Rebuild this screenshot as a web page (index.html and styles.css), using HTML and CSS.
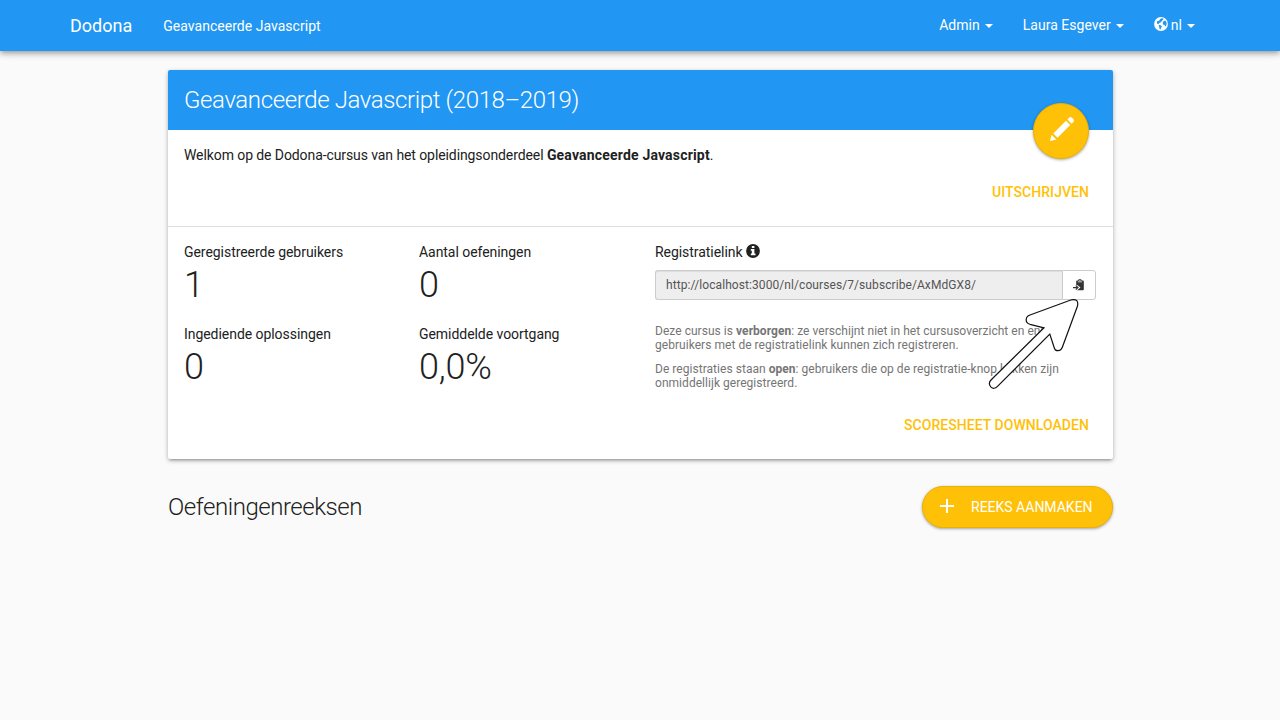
FILE: index.html
```html
<!DOCTYPE html>
<html lang="nl">
<head>
<meta charset="utf-8">
<title>Geavanceerde Javascript - Dodona</title>
<link rel="stylesheet" href="styles.css">
</head>
<body>
<nav class="navbar">
  <div class="nav-left">
    <a class="brand">Dodona</a>
    <a class="crumb">Geavanceerde Javascript</a>
  </div>
  <div class="nav-right">
    <a class="nav-item">Admin<span class="caret"></span></a>
    <a class="nav-item">Laura Esgever<span class="caret"></span></a>
    <a class="nav-item"><svg class="globe" viewBox="0 0 14 14"><circle cx="7" cy="7" r="6.9" fill="#fff"/><path d="M7.6 1.2 9.4 1.6 9.2 2.8 8 3.2 8.4 4.3 7.2 4.5 6.6 5.6 4.8 6 5 7.1 3.6 6.9 2.8 5.6 3.4 4.1 5.2 3.7 6 2.3z M9.8 4 11.4 3.4 12.7 6 12.4 8.2 11.4 9.6 10.6 8 9 7.4 8.7 5.5z M4.6 7.7 6.7 8.3 8 9.5 7 10.8 6.6 12.7 5.4 11.6 5.1 9.6z" fill="#2196f3"/></svg>nl<span class="caret"></span></a>
  </div>
</nav>
<main class="page">
  <section class="card">
    <header class="card-title">
      <h2>Geavanceerde Javascript (2018–2019)</h2>
      <a class="fab"><svg viewBox="0 0 24 24" class="pencil"><g transform="translate(13 11) rotate(-45)" fill="#fff"><path d="M-16.9 0-11.4-3.4V3.4zM-9.3-3H8.7V3H-9.3z"/><path d="M10.6-3h2.4q2 0 2 2V1q0 2-2 2h-2.4z"/></g></svg></a>
    </header>
    <div class="intro">
      <p><span class="welcome">Welkom op de Dodona-cursus van het opleidingsonderdeel </span><b class="course">Geavanceerde Javascript</b>.</p>
      <a class="flat-btn">UITSCHRIJVEN</a>
    </div>
    <div class="details">
      <div class="stats">
        <div class="stat"><span>Geregistreerde gebruikers</span><strong>1</strong></div>
        <div class="stat"><span>Aantal oefeningen</span><strong>0</strong></div>
        <div class="stat"><span>Ingediende oplossingen</span><strong>0</strong></div>
        <div class="stat"><span>Gemiddelde voortgang</span><strong>0,0%</strong></div>
      </div>
      <div class="registration">
        <div class="label">Registratielink <svg class="info" viewBox="0 0 14 14"><circle cx="7" cy="7" r="6.9"/><path d="M5.8 2h2.6v2H5.8zM4.8 5.1h3.6v4.5h1.1v1.6H4.8V9.6h1V6.7h-1z" fill="#fff"/></svg></div>
        <div class="input-group">
          <div class="field">http://localhost:3000/nl/courses/7/subscribe/AxMdGX8/</div>
          <a class="copy"><svg viewBox="0 0 12 12"><path d="M4 1.6h1.3V.9q0-.6.6-.6h2q.6 0 .6.6v.7H10q.8 0 .8.8v8.1q0 .8-.8.8H4q-.8 0-.8-.8V2.4q0-.8.8-.8z" fill="#333"/><path d="M4.8 3.2h4.3V2.5H4.8zM6.3 1.1h1.2v.7H6.3z" fill="#fff"/><path d="M3 6.7 5.4 8.6 3 10.5M3.2 8.6h2" fill="none" stroke="#fff" stroke-width="2.6"/><path d="M0 8.6h4.6M2.8 6.6 5 8.6 2.8 10.6" fill="none" stroke="#333" stroke-width="1.1"/></svg></a>
        </div>
        <p class="help">Deze cursus is <b>verborgen</b>: ze verschijnt niet in het cursusoverzicht en enkel gebruikers met de registratielink kunnen zich registreren.</p>
        <p class="help">De registraties staan <b>open</b>: gebruikers die op de registratie-knop klikken zijn onmiddellijk geregistreerd.</p>
      </div>
    </div>
    <div class="actions"><a class="flat-btn">SCORESHEET DOWNLOADEN</a></div>
  </section>
  <div class="series-head">
    <h2>Oefeningenreeksen</h2>
    <a class="add"><svg viewBox="0 0 14 14"><path d="M7 0v14M0 7h14" stroke="#fff" stroke-width="2"/></svg>REEKS AANMAKEN</a>
  </div>
</main>
<svg class="pointer" viewBox="0 0 96 96"><path d="M86.5 3.8Q94 2.5 92.5 10L77.8 50Q76.5 54.7 73 54.7Q69.8 54.7 69 51L64.8 38 12.5 90.3Q9 94 5.8 90.8Q2.8 87.5 6 84L59 31.8 45 28.3Q41 27 41.2 23.6Q41.3 20.3 45 19Z"/></svg>
</body>
</html>
```
FILE: styles.css
```css
* { box-sizing: border-box; }
body {
  margin: 0;
  height: 720px;
  overflow: hidden;
  background: #fafafa;
  color: #212121;
  font: 14px/20px Roboto, sans-serif;
}
h2, p { margin: 0; }
b { font-weight: 700; }
.navbar {
  height: 51px;
  padding: 0 85px 0 70px;
  display: flex;
  justify-content: space-between;
  background: #2196f3;
  color: #fff;
  box-shadow: 0 2px 4px -1px rgba(0,0,0,.2), 0 4px 5px 0 rgba(0,0,0,.14), 0 1px 10px 0 rgba(0,0,0,.12);
}
.nav-left { display: flex; gap: 31px; padding-top: 16px; }
.brand { font-size: 18px; }
.nav-right { display: flex; gap: 30px; padding-top: 15px; }
.crumb, .nav-item { white-space: nowrap; }
.crumb { letter-spacing: .03px; }
.nav-item { letter-spacing: .03px; }
.caret {
  display: inline-block;
  margin-left: 5px;
  vertical-align: middle;
  border: 4px solid transparent;
  border-top-color: #fff;
  border-bottom: 0;
}
.globe { width: 14px; height: 14px; vertical-align: -1px; margin-right: 3px; }
.page { width: 945px; margin: 19px 0 0 168px; }
.card {
  height: 389px;
  background: #fff;
  border-radius: 2px;
  box-shadow: 0 2px 4px 0 rgba(0,0,0,.2), 0 3px 2px -2px rgba(0,0,0,.2), 0 1px 5px 0 rgba(0,0,0,.12);
}
.card-title {
  position: relative;
  height: 60px;
  padding: 17px 16px;
  background: #2196f3;
  color: #fff;
  border-radius: 2px 2px 0 0;
}
h2 { font-size: 24px; line-height: 26px; font-weight: 300; letter-spacing: -.38px; }
.fab {
  position: absolute;
  right: 24px;
  top: 33px;
  width: 56px;
  height: 56px;
  display: flex;
  justify-content: center;
  padding-top: 14px;
  border: 1px solid #ecb100;
  border-radius: 50%;
  background: #ffc107;
  box-shadow: 0 1px 3px rgba(0,0,0,.35);
}
.pencil { width: 24px; height: 24px; overflow: visible; }
.intro {
  height: 97px;
  padding: 15px 16px 0;
  border-bottom: 1px solid #e0e0e0;
  display: flex;
  flex-direction: column;
  gap: 17px;
}
.welcome { letter-spacing: -.09px; }
.course { letter-spacing: .18px; }
.flat-btn { align-self: flex-end; margin-right: 8px; color: #ffc107; font-weight: 500; letter-spacing: .05px; }
.details { display: flex; height: 183px; padding: 15px 16px 0; }
.stats { width: 471px; display: grid; grid-template-columns: 235px 236px; grid-auto-rows: 82px; }
.stat span, .stat strong { display: block; }
.stat span, .label { letter-spacing: -.05px; }
.stat strong { font-size: 36px; line-height: 40px; font-weight: 300; margin-top: 3px; letter-spacing: -.2px; }
.registration { width: 441px; }
.info { width: 14px; height: 14px; vertical-align: -1px; fill: #212121; }
.input-group { display: flex; height: 30px; margin: 8px 0 24px; }
.field {
  width: 407px;
  padding: 5px 10px;
  border: 1px solid #ccc;
  border-right: 0;
  border-radius: 3px 0 0 3px;
  background: #eee;
  box-shadow: inset 0 1px 1px rgba(0,0,0,.075);
  color: #555;
  font-size: 12px;
  line-height: 18px;
  letter-spacing: .08px;
}
.copy {
  width: 34px;
  display: flex;
  align-items: center;
  justify-content: center;
  border: 1px solid #ccc;
  border-radius: 0 3px 3px 0;
}
.copy svg { width: 12px; height: 12px; }
.help { font-size: 12px; line-height: 14px; color: #757575; margin-bottom: 10px; letter-spacing: .04px; }
.actions { display: flex; justify-content: flex-end; padding: 5px 16px 0; }
.series-head { display: flex; justify-content: space-between; align-items: center; margin-top: 27px; }
.series-head h2 { letter-spacing: -.45px; }
.add {
  width: 191px;
  height: 42px;
  display: flex;
  align-items: center;
  gap: 17px;
  padding-left: 17px;
  border: 1px solid #ecb100;
  border-radius: 21px;
  background: #ffc107;
  color: #fff;
  box-shadow: 0 1px 3px rgba(0,0,0,.35);
}
.add svg { width: 14px; height: 14px; position: relative; top: -1px; }
.pointer {
  position: absolute;
  left: 985px;
  top: 296px;
  width: 96px;
  height: 96px;
  fill: #fff;
  stroke: #111;
  stroke-width: 1.2;
}
```
